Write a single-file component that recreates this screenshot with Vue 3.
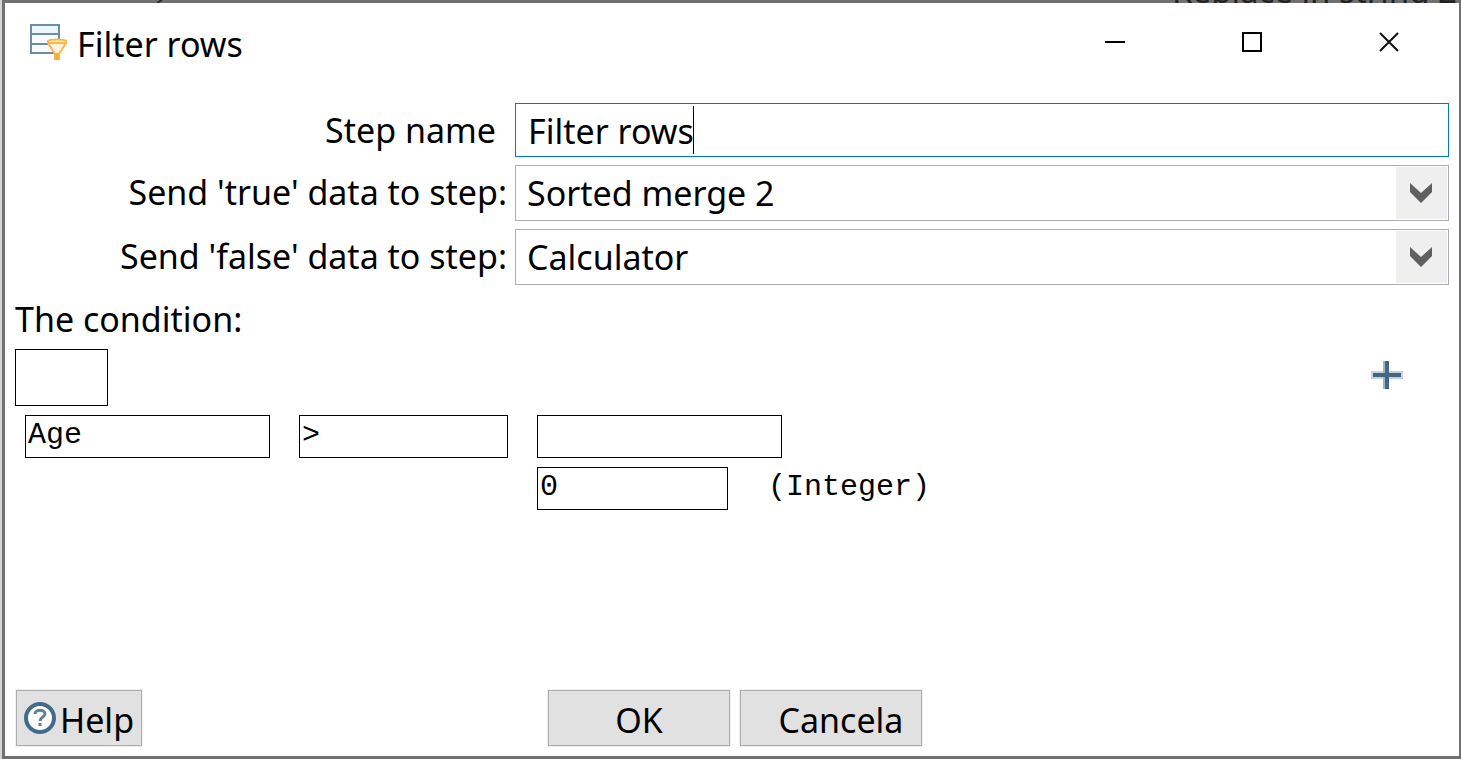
<script setup>
import { ref } from 'vue'

const stepName = ref('Filter rows')
const trueStep = ref('Sorted merge 2')
const falseStep = ref('Calculator')
const leftField = ref('Age')
const comparator = ref('>')
const rightField = ref('')
const rightValue = ref('0')
</script>

<template>
  <div class="desktop">
    <div class="canvas-strip" aria-hidden="true">
      <svg class="hop" width="12" height="3" viewBox="0 0 12 3"><path d="M1 3 6 0" stroke="#23303a" stroke-width="2" /></svg>
      <span class="canvas-text">Replace in string 2</span>
    </div>
    <main class="dialog">
      <header class="titlebar">
        <svg class="app-icon" width="38" height="38" viewBox="0 0 38 38" fill="none">
          <rect x="2" y="2" width="28" height="28" fill="#f7fbfe" />
          <rect x="2" y="2" width="28" height="9" fill="#eaf7ff" />
          <path d="M2 2H30V30H2Z" stroke="#6f8ca5" stroke-width="2" />
          <path d="M2 11H30M2 21H30" stroke="#6f8ca5" stroke-width="2" />
          <path d="M19 18C21 16 35 16 37 18L37 20 30 31V36H26V31L19 20Z" fill="#fff3df" stroke="#ffb547" stroke-width="2" />
          <path d="M19 20H37" stroke="#ffb547" stroke-width="2" />
          <path d="M28 30V37" stroke="#ffa62b" stroke-width="3" />
        </svg>
        <h1 class="title">Filter rows</h1>
        <div class="window-buttons">
          <button type="button" aria-label="Minimize">
            <svg width="22" height="22" viewBox="0 0 22 22"><path d="M1 11H21" stroke="#000" stroke-width="2" /></svg>
          </button>
          <button type="button" aria-label="Maximize">
            <svg width="22" height="22" viewBox="0 0 22 22"><rect x="2" y="2" width="18" height="18" fill="none" stroke="#000" stroke-width="2" /></svg>
          </button>
          <button type="button" aria-label="Close">
            <svg width="22" height="22" viewBox="0 0 22 22"><path d="M2 2 20 20M20 2 2 20" stroke="#111" stroke-width="2" /></svg>
          </button>
        </div>
      </header>

      <form class="content" @submit.prevent>
        <div class="fields">
          <label class="name-label" for="step-name">Step name</label>
          <div class="control">
            <input id="step-name" v-model="stepName" class="name-input" type="text" />
            <span class="caret"></span>
          </div>

          <label for="true-step">Send 'true' data to step:</label>
          <div class="control">
            <select id="true-step" v-model="trueStep">
              <option>Sorted merge 2</option>
              <option>Calculator</option>
            </select>
            <span class="drop"><svg width="22" height="20" viewBox="0 0 22 20"><path d="M0 0 11 10 22 0V9L11 20 0 9Z" fill="#606060" /></svg></span>
          </div>

          <label for="false-step">Send 'false' data to step:</label>
          <div class="control">
            <select id="false-step" v-model="falseStep">
              <option>Calculator</option>
              <option>Sorted merge 2</option>
            </select>
            <span class="drop"><svg width="22" height="20" viewBox="0 0 22 20"><path d="M0 0 11 10 22 0V9L11 20 0 9Z" fill="#606060" /></svg></span>
          </div>
        </div>

        <h2 class="condition-title">The condition:</h2>
        <section class="condition">
          <div class="condition-top">
            <button class="negate" type="button" aria-label="Negate condition"></button>
            <button class="add" type="button" aria-label="Add condition">
              <svg width="32" height="28" viewBox="0 0 32 28">
                <path d="M0 14H32" stroke="#c6d3dd" stroke-width="8" />
                <path d="M12 0H18V28H12Z" fill="#9fb4c4" />
                <path d="M2 14H30" stroke="#426684" stroke-width="4" />
                <path d="M14 0H18V28H14Z" fill="#426684" />
              </svg>
            </button>
          </div>
          <div class="expression">
            <input v-model="leftField" type="text" aria-label="Left field" />
            <input v-model="comparator" type="text" aria-label="Comparator" />
            <input v-model="rightField" type="text" aria-label="Right field" />
            <div class="value-row">
              <input id="right-value" v-model="rightValue" type="text" />
              <label for="right-value">(Integer)</label>
            </div>
          </div>
        </section>

        <footer class="footer">
          <button class="push help" type="button">
            <svg width="32" height="32" viewBox="0 0 32 32" fill="none">
              <circle cx="16" cy="16" r="14" fill="#fff" stroke="#426a8b" stroke-width="4" />
              <path d="M11 12C11 7 21 7 21 12C21 15 16 15 16 19" stroke="#5f809b" stroke-width="3" />
              <path d="M16 21V24" stroke="#5f809b" stroke-width="3" />
            </svg>
            <span>Help</span>
          </button>
          <div class="actions">
            <button class="push" type="submit">OK</button>
            <button class="push cancel" type="button">Cancela</button>
          </div>
        </footer>
      </form>
    </main>
  </div>
</template>

<style>
body {
  background: #d4d4d4;
}
</style>

<style scoped>
* {
  box-sizing: border-box;
}
.desktop {
  display: flex;
  flex-direction: column;
  min-height: 100vh;
  padding-left: 2px;
  font-family: "Noto Sans", "Open Sans", sans-serif;
  font-size: 34px;
  color: #000;
}
.canvas-strip {
  display: flex;
  justify-content: space-between;
  height: 3px;
  overflow: hidden;
  padding: 0 4px 0 154px;
  background: #707070;
}
.canvas-text {
  margin-top: -27px;
  font-size: 33px;
  line-height: 36px;
  color: #222;
}
.dialog {
  flex: 1;
  display: flex;
  flex-direction: column;
  background: #fff;
  border: solid #707070;
  border-width: 0 2px 3px 3px;
}
button,
input,
select {
  margin: 0;
  padding: 0;
  border: 0;
  border-radius: 0;
  outline: 0;
  background: none;
  font: inherit;
  color: inherit;
}
svg {
  display: block;
}
.titlebar {
  display: flex;
  align-items: center;
  height: 78px;
  padding-left: 24px;
}
.title {
  margin: 0 0 0 10px;
  padding-top: 4px;
  font-size: 34px;
  font-weight: 400;
  line-height: 48px;
}
.window-buttons {
  display: flex;
  align-self: stretch;
  margin: 0 2px 0 auto;
}
.window-buttons button {
  display: grid;
  place-items: center;
  width: 137px;
}
.content {
  flex: 1;
  display: flex;
  flex-direction: column;
  padding: 22px 10px 10px;
}
.fields {
  display: grid;
  grid-template-columns: 492fr 934fr;
  gap: 8px;
}
.fields label {
  line-height: 54px;
  text-align: right;
  white-space: nowrap;
}
.fields .name-label {
  padding-right: 11px;
}
.control {
  position: relative;
  display: flex;
}
.name-input {
  width: 100%;
  height: 54px;
  padding: 2px 0 0 12px;
  border: 1px solid #0078d7;
}
.caret {
  position: absolute;
  top: 3px;
  left: 178px;
  width: 1px;
  height: 48px;
  background: #000;
}
select {
  width: 100%;
  height: 56px;
  padding-left: 11px;
  border: 1px solid #abadb3;
  appearance: none;
}
.drop {
  position: absolute;
  top: 2px;
  right: 2px;
  bottom: 2px;
  display: grid;
  place-items: center;
  width: 51px;
  padding-right: 2px;
  background: #efefef;
  pointer-events: none;
}
.condition-title {
  margin: 8px 0 4px;
  font-size: 34px;
  font-weight: 400;
  line-height: 52px;
}
.condition-top {
  display: flex;
  justify-content: space-between;
  padding-right: 46px;
}
.negate {
  width: 93px;
  height: 57px;
  border: 1px solid #000;
}
.add {
  align-self: flex-start;
  padding-top: 12px;
}
.expression {
  display: grid;
  grid-template-columns: 245px 209px 245px auto;
  gap: 9px 29px;
  padding: 9px 0 0 10px;
  font-family: "Liberation Mono", monospace;
  font-size: 30px;
}
.expression input {
  width: 100%;
  height: 43px;
  padding: 0 2px 4px;
  border: 1px solid #000;
}
.value-row {
  grid-column: 3 / 5;
  display: flex;
  gap: 40px;
}
.value-row input {
  width: 191px;
}
.value-row label {
  line-height: 40px;
}
.footer {
  display: grid;
  grid-template-columns: 1fr auto 1fr;
  align-items: center;
  margin-top: auto;
}
.push {
  width: 182px;
  height: 56px;
  padding-top: 4px;
  border: 1px solid #adadad;
  box-shadow: 0 0 0 1px #f0f0f0;
  background: #e1e1e1;
  line-height: 48px;
}
.help {
  display: flex;
  align-items: center;
  gap: 4px;
  width: 126px;
  margin-left: 1px;
  padding: 0 0 0 7px;
}
.help span {
  padding-top: 4px;
}
.actions {
  display: flex;
  gap: 10px;
  margin-left: 6px;
}
.cancel {
  padding-left: 20px;
}
</style>
